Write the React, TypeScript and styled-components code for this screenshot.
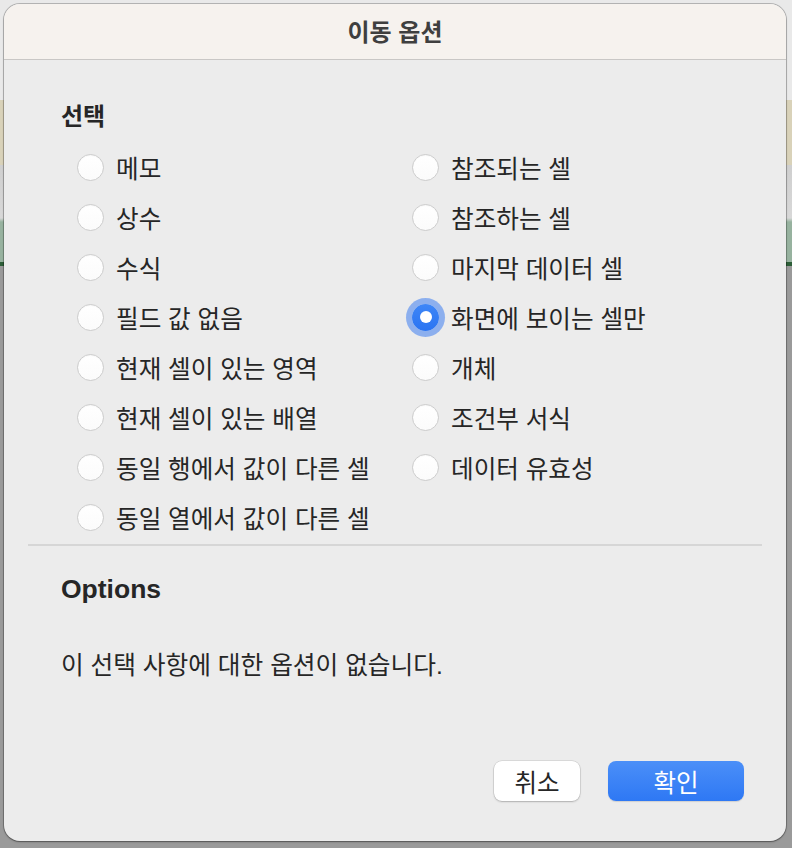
import React from "react";
import styled, { createGlobalStyle } from "styled-components";

const Global = createGlobalStyle`
  html, body { margin: 0; padding: 0; }
  body {
    width: 792px;
    height: 848px;
    overflow: hidden;
    font-family: "Liberation Sans", "Noto Sans CJK KR", sans-serif;
    background: linear-gradient(to bottom,
      #e9e9e9 0px, #e9e9e9 100px,
      #d9d2b9 100px, #d9d2b9 165px,
      #cfcfcf 165px, #d8d8d8 218px,
      #97b29f 222px, #97b29f 262px,
      #2d5e38 262px, #2d5e38 266px,
      #9a9a9a 266px, #9a9a9a 100%);
  }
`;

const Backdrop = styled.div`
  width: 792px;
  height: 848px;
  box-sizing: border-box;
  padding: 4px 6px 7px 4px;
  display: flex;
`;

const Dialog = styled.div`
  flex: 1;
  display: flex;
  flex-direction: column;
  background: #ececec;
  border-radius: 16px;
  overflow: hidden;
  box-shadow: 0 0 0 1px rgba(0, 0, 0, 0.22), 0 1px 2px rgba(0, 0, 0, 0.3);
`;

const TitleBar = styled.div`
  height: 56px;
  flex: none;
  display: flex;
  align-items: center;
  justify-content: center;
  background: #f6f2ee;
  border-bottom: 1px solid #c9c7c5;
  font-size: 24px;
  font-weight: 700;
  color: #3f3f3f;
  padding-bottom: 2px;
  box-sizing: border-box;
`;

const Body = styled.div`
  flex: 1;
  display: flex;
  flex-direction: column;
  padding: 42px 24px 40px 24px;
`;

const Heading = styled.div`
  padding-left: 33px;
  height: 30px;
  line-height: 30px;
  font-size: 24px;
  font-weight: 700;
  color: #262626;
  margin-bottom: 10px;
`;

const OptionsGrid = styled.div`
  display: grid;
  grid-template-columns: 335px 1fr;
  grid-auto-flow: column;
  grid-template-rows: repeat(8, 50px);
  padding-left: 49px;
`;

const Row = styled.label`
  display: flex;
  align-items: center;
  gap: 12px;
  font-size: 24.6px;
  color: #262626;
  white-space: nowrap;
`;

const Radio = styled.span<{ $on?: boolean }>`
  flex: none;
  width: 27px;
  height: 27px;
  box-sizing: border-box;
  border-radius: 50%;
  display: flex;
  align-items: center;
  justify-content: center;
  background: ${(p) =>
    p.$on
      ? "linear-gradient(to bottom, #3e86f7, #2a74f2)"
      : "linear-gradient(to bottom, #ffffff, #fbfbfb)"};
  border: ${(p) => (p.$on ? "none" : "1px solid #cdcdcd")};
  box-shadow: ${(p) =>
    p.$on ? "0 0 0 6px rgba(100, 150, 240, 0.7)" : "inset 0 1px 1px rgba(0,0,0,0.03)"};
`;

const Dot = styled.span`
  width: 12px;
  height: 12px;
  border-radius: 50%;
  background: #ffffff;
`;

const Separator = styled.div`
  height: 2px;
  background: #d6d6d6;
  margin-top: 2px;
`;

const OptionsHeading = styled(Heading)`
  margin-top: 28px;
  margin-bottom: 0;
  font-size: 26.5px;
`;

const Message = styled.div`
  margin-top: 47px;
  padding-left: 33px;
  height: 30px;
  line-height: 30px;
  font-size: 24.7px;
  color: #262626;
`;

const Footer = styled.div`
  margin-top: auto;
  display: flex;
  justify-content: flex-end;
  gap: 28px;
  padding-right: 18px;
`;

const Button = styled.button<{ $primary?: boolean }>`
  height: 40px;
  width: ${(p) => (p.$primary ? "136px" : "86px")};
  border-radius: 8px;
  border: none;
  font-family: "Liberation Sans", "Noto Sans CJK KR", sans-serif;
  font-size: 24.5px;
  padding: 0;
  color: ${(p) => (p.$primary ? "#ffffff" : "#262626")};
  background: ${(p) =>
    p.$primary ? "linear-gradient(to bottom, #4b8ff8, #2e78f4)" : "#ffffff"};
  box-shadow: ${(p) =>
    p.$primary
      ? "0 1px 1px rgba(0,0,0,0.12)"
      : "0 0 0 0.5px rgba(0,0,0,0.15), 0 1px 2px rgba(0,0,0,0.2)"};
`;

const left = [
  "메모",
  "상수",
  "수식",
  "필드 값 없음",
  "현재 셀이 있는 영역",
  "현재 셀이 있는 배열",
  "동일 행에서 값이 다른 셀",
  "동일 열에서 값이 다른 셀",
];
const right = [
  "참조되는 셀",
  "참조하는 셀",
  "마지막 데이터 셀",
  "화면에 보이는 셀만",
  "개체",
  "조건부 서식",
  "데이터 유효성",
];
const selected = "화면에 보이는 셀만";

export default function App() {
  const all = [...left, ...right];
  return (
    <>
      <Global />
      <Backdrop>
        <Dialog>
          <TitleBar>이동 옵션</TitleBar>
          <Body>
            <Heading>선택</Heading>
            <OptionsGrid>
              {all.map((t) => (
                <Row key={t}>
                  <Radio $on={t === selected}>{t === selected && <Dot />}</Radio>
                  {t}
                </Row>
              ))}
            </OptionsGrid>
            <Separator />
            <OptionsHeading>Options</OptionsHeading>
            <Message>이 선택 사항에 대한 옵션이 없습니다.</Message>
            <Footer>
              <Button>취소</Button>
              <Button $primary>확인</Button>
            </Footer>
          </Body>
        </Dialog>
      </Backdrop>
    </>
  );
}
